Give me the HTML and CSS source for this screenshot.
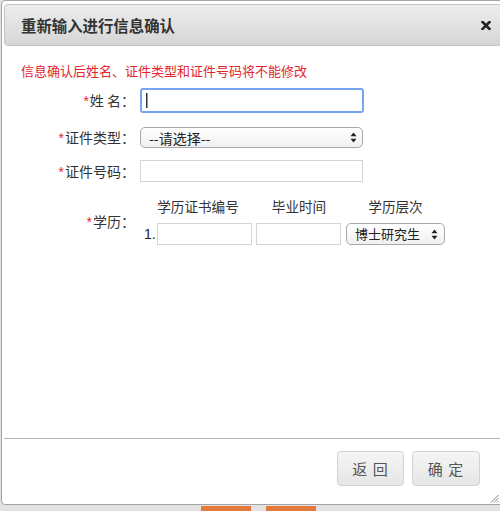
FILE: index.html
```html
<!DOCTYPE html>
<html lang="zh-CN">
<head>
<meta charset="utf-8">
<title>重新输入进行信息确认</title>
<link rel="stylesheet" href="styles.css">
</head>
<body>
<div class="page">
  <div class="dialog">
    <div class="titlebar">
      <span class="title">重新输入进行信息确认</span>
      <svg class="close" width="10" height="9" viewBox="0 0 10 9"><path d="M1.5 1 L8.5 8 M8.5 1 L1.5 8" stroke="#222" stroke-width="2.6" stroke-linecap="square"/></svg>
    </div>
    <div class="content">
      <p class="notice">信息确认后姓名、证件类型和证件号码将不能修改</p>
      <div class="row row-name">
        <label class="lbl"><span class="req">*</span>姓 名：</label>
        <input class="field field-focus" type="text">
      </div>
      <div class="row row-type">
        <label class="lbl"><span class="req">*</span>证件类型：</label>
        <div class="select select-type">
          <span class="sel-text">--请选择--</span>
          <svg class="arrows" width="7" height="11" viewBox="0 0 7 11"><path d="M3.5 0.5 L6.5 4.2 L0.5 4.2 Z M3.5 10.5 L6.5 6.8 L0.5 6.8 Z" fill="#222"/></svg>
        </div>
      </div>
      <div class="row row-id">
        <label class="lbl"><span class="req">*</span>证件号码：</label>
        <input class="field field-id" type="text">
      </div>
      <div class="row row-edu">
        <label class="lbl"><span class="req">*</span>学历：</label>
        <div class="edu">
          <div class="edu-head">学历证书编号</div>
          <div class="edu-head">毕业时间</div>
          <div class="edu-head">学历层次</div>
          <div class="edu-cell">
            <span class="num">1.</span>
            <input class="field field-cert" type="text">
          </div>
          <div class="edu-cell">
            <input class="field field-date" type="text">
          </div>
          <div class="edu-cell">
            <div class="select select-level">
              <span class="sel-text">博士研究生</span>
              <svg class="arrows" width="7" height="11" viewBox="0 0 7 11"><path d="M3.5 0.5 L6.5 4.2 L0.5 4.2 Z M3.5 10.5 L6.5 6.8 L0.5 6.8 Z" fill="#222"/></svg>
            </div>
          </div>
        </div>
      </div>
    </div>
    <div class="buttonpane">
      <button class="btn btn-back" type="button">返 回</button>
      <button class="btn btn-ok" type="button">确 定</button>
    </div>
    <svg class="resize" width="9" height="9" viewBox="0 0 9 9"><path d="M8.5 1 L1 8.5 M8.5 4 L4 8.5 M8.5 7 L7 8.5" stroke="#8a8a8a" stroke-width="1"/></svg>
  </div>
  <div class="strip">
    <span class="tab"></span>
    <span class="tab"></span>
  </div>
</div>
</body>
</html>
```

FILE: styles.css
```css
html, body {
  margin: 0;
  padding: 0;
}

body {
  background: #e3e3e3;
  font-family: "Noto Sans CJK SC", "Liberation Sans", sans-serif;
  color: #333;
}

.page {
  width: 500px;
  height: 511px;
  overflow: hidden;
  display: flex;
  flex-direction: column;
}

.dialog {
  position: relative;
  flex: none;
  box-sizing: border-box;
  width: 505px;
  height: 505px;
  margin-left: 1px;
  border: 1px solid #a4a4a4;
  border-radius: 4px;
  background: #fff;
  padding: 3px 3px 0 2px;
  display: flex;
  flex-direction: column;
}

.titlebar {
  flex: none;
  box-sizing: border-box;
  height: 42px;
  border: 1px solid #c2c2c2;
  border-radius: 4px;
  background: linear-gradient(#ededed, #d6d6d6);
  display: flex;
  align-items: center;
  padding-left: 16px;
}

.title {
  font-size: 15.4px;
  font-weight: bold;
  color: #333;
  line-height: 20px;
}

.close {
  margin-left: auto;
  margin-right: 10px;
  margin-top: 1px;
}

.content {
  flex: 1;
  padding-top: 16px;
}

.notice {
  margin: 0 0 0 17px;
  font-size: 13px;
  line-height: 18px;
  color: #e3262d;
}

.row {
  display: grid;
  grid-template-columns: 124px 1fr;
  column-gap: 12px;
  align-items: center;
}

.row-name { margin-top: 8px; }
.row-type { margin-top: 14px; }
.row-id { margin-top: 12px; }
.row-edu { margin-top: 16px; }

.lbl {
  text-align: right;
  font-size: 14px;
  line-height: 18px;
  color: #333;
  margin-right: -7px;
}

.req {
  color: #e3262d;
  font-family: "Liberation Sans", sans-serif;
  margin-right: 1px;
}

.field {
  display: block;
  box-sizing: border-box;
  margin: 0;
  padding: 0;
  border: 1px solid #d4d4d4;
  background: #fff;
  outline: none;
}

.field-focus {
  width: 224px;
  height: 25px;
  border: 2px solid #77a5ee;
  border-radius: 3px;
  background: linear-gradient(#333, #333) no-repeat 4px center / 1.5px 15px, #fff;
}

.field-id {
  width: 223px;
  height: 22px;
}

.select {
  box-sizing: border-box;
  display: flex;
  align-items: center;
  border: 1px solid #a9a9a9;
  border-radius: 5px;
  background: linear-gradient(#ffffff, #f0f0f0);
  color: #222;
}

.select-type {
  width: 223px;
  height: 21px;
  padding-left: 8px;
  font-size: 14px;
}

.sel-text {
  line-height: 18px;
}

.arrows {
  margin-left: auto;
  margin-right: 5px;
}

.edu {
  margin-left: 4px;
  display: grid;
  grid-template-columns: 108px 86px 99px;
  column-gap: 4px;
  row-gap: 8px;
}

.edu-head {
  text-align: center;
  font-size: 13.6px;
  line-height: 17px;
  color: #333;
}

.edu-cell {
  display: flex;
  align-items: center;
}

.num {
  font-family: "Liberation Sans", sans-serif;
  font-size: 14px;
  color: #222;
}

.field-cert {
  margin-left: auto;
  width: 95px;
  height: 22px;
}

.field-date {
  width: 85px;
  height: 22px;
}

.select-level {
  width: 99px;
  height: 22px;
  padding-left: 8px;
  font-size: 13px;
}

.select-level .arrows {
  margin-right: 6px;
}

.buttonpane {
  flex: none;
  border-top: 1px solid #b3b3b3;
  padding: 12px 22px 18px 0;
  display: flex;
  justify-content: flex-end;
  gap: 8px;
}

.btn {
  box-sizing: border-box;
  height: 35px;
  margin: 0;
  padding: 0;
  border: 1px solid #d2d2d2;
  border-radius: 4px;
  background: linear-gradient(#f5f5f5, #e6e6e6);
  font-family: "Noto Sans CJK SC", "Liberation Sans", sans-serif;
  font-size: 15px;
  color: #555;
  letter-spacing: 1px;
}

.btn-back { width: 67px; }
.btn-ok { width: 68px; }

.resize {
  position: absolute;
  right: 6px;
  bottom: 1px;
}

.strip {
  flex: 1;
  display: flex;
  gap: 15px;
  padding: 1px 0 0 201px;
  background: #e3e3e3;
}

.tab {
  width: 50px;
  background: #e57a3d;
}
```
